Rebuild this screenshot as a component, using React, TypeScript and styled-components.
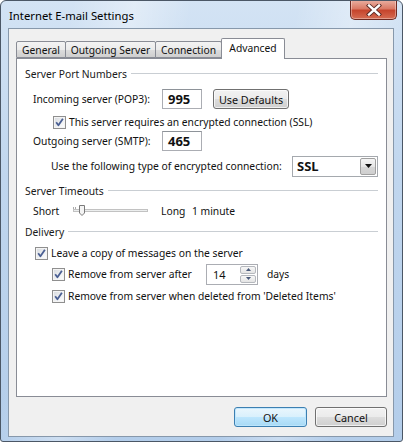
import React from "react";
import styled, { createGlobalStyle } from "styled-components";

const FONT = `"Noto Sans", "Open Sans", "DejaVu Sans", sans-serif`;

const GlobalStyle = createGlobalStyle`
  html, body { margin: 0; padding: 0; background: #ffffff; }
  body { font-family: ${FONT}; font-size: 10.3px; color: #111; }
  * { box-sizing: border-box; }
`;

const Window = styled.div`
  width: 403px;
  height: 442px;
  border: 1px solid #4b5766;
  border-radius: 6px 6px 3px 3px;
  background:
    linear-gradient(100deg, rgba(255,255,255,0) 15%, rgba(255,255,255,0.35) 28%, rgba(255,255,255,0) 40%, rgba(255,255,255,0) 62%, rgba(255,255,255,0.3) 74%, rgba(255,255,255,0) 86%),
    linear-gradient(180deg, #d3e3f4 0%, #c0d6ee 40%, #b3cdea 100%);
  display: flex;
  flex-direction: column;
  overflow: hidden;
`;

const TitleBar = styled.div`
  height: 27px;
  flex: none;
  display: flex;
  align-items: flex-start;
  justify-content: space-between;
  padding: 0 5px 0 8px;
`;

const Title = styled.div`
  font-size: 11.3px;
  line-height: 27px;
  padding-top: 1px;
  color: #000;
`;

const CloseButton = styled.div`
  width: 47px;
  height: 20px;
  margin-top: -1px;
  border: 1px solid #6e2a22;
  border-top: none;
  border-radius: 0 0 5px 5px;
  background: linear-gradient(180deg, #eab1a3 0%, #da7a66 45%, #c6452d 55%, #d66c52 100%);
  box-shadow: inset 0 0 0 1px rgba(255,255,255,0.35);
  display: flex;
  align-items: center;
  justify-content: center;
`;

const Client = styled.div`
  flex: 1;
  margin: 0 8px 4px 7px;
  border: 1px solid #8798ab;
  background: #f0f0f0;
  padding: 9px 6px 0 7px;
  display: flex;
  flex-direction: column;
`;

const TabBar = styled.div`
  height: 20px;
  display: flex;
  align-items: flex-end;
  position: relative;
  z-index: 1;
`;

const Tab = styled.div<{ $active?: boolean; $w: number }>`
  width: ${(p) => p.$w}px;
  height: ${(p) => (p.$active ? 21 : 17)}px;
  margin-right: -1px;
  margin-bottom: ${(p) => (p.$active ? -1 : 0)}px;
  border: 1px solid #898c95;
  border-bottom: ${(p) => (p.$active ? "none" : "1px solid #898c95")};
  border-radius: 2px 2px 0 0;
  background: ${(p) =>
    p.$active
      ? "#ffffff"
      : "linear-gradient(180deg, #f3f3f3 0%, #ebebeb 50%, #dddddd 51%, #cfcfcf 100%)"};
  display: flex;
  justify-content: center;
  align-items: ${(p) => (p.$active ? "flex-start" : "center")};
  padding-top: ${(p) => (p.$active ? 2 : 0)}px;
  color: #111;
  position: relative;
  z-index: ${(p) => (p.$active ? 2 : 1)};
  white-space: nowrap;
`;

const Panel = styled.div`
  width: 371px;
  height: 339px;
  border: 1px solid #898c95;
  background: #ffffff;
  padding: 5px 8px 0 8px;
  display: flex;
  flex-direction: column;
`;

const Header = styled.div<{ $h: number }>`
  height: ${(p) => p.$h}px;
  display: flex;
  align-items: center;
  gap: 4px;
  color: #1a1a1a;
`;

const HeaderLine = styled.div`
  flex: 1;
  height: 2px;
  border-top: 1px solid #c9ced3;
  border-bottom: 1px solid #ffffff;
`;

const Row = styled.div<{ $h: number; $indent: number }>`
  height: ${(p) => p.$h}px;
  padding-left: ${(p) => p.$indent}px;
  display: flex;
  align-items: center;
  white-space: nowrap;
`;

const Label = styled.span<{ $w?: number; $gap?: number }>`
  display: inline-block;
  ${(p) => (p.$w ? `width: ${p.$w}px; flex: none;` : "")}
  margin-left: ${(p) => p.$gap ?? 0}px;
  color: #111;
`;

const TextBox = styled.div`
  width: 40px;
  height: 20px;
  border: 1px solid #abadb3;
  border-top-color: #8e9399;
  background: #fff;
  font-size: 13px;
  font-weight: 700;
  padding-left: 5px;
  line-height: 18px;
  color: #111;
`;

const PushButton = styled.div<{ $w: number; $primary?: boolean; $ml?: number }>`
  width: ${(p) => p.$w}px;
  height: 20px;
  margin-left: ${(p) => p.$ml ?? 0}px;
  border: 1px solid ${(p) => (p.$primary ? "#3c7fb1" : "#707070")};
  border-radius: 3px;
  background: ${(p) =>
    p.$primary
      ? "linear-gradient(180deg, #eaf6fd 0%, #d9f0fc 50%, #bee6fd 51%, #a7d9f5 100%)"
      : "linear-gradient(180deg, #f2f2f2 0%, #ebebeb 50%, #dddddd 51%, #cfcfcf 100%)"};
  box-shadow: inset 0 0 0 1px ${(p) => (p.$primary ? "rgba(190,230,253,0.9)" : "rgba(255,255,255,0.7)")};
  display: flex;
  align-items: center;
  justify-content: center;
  font-size: 10.8px;
  color: #111;
`;

const Check = styled.span<{ $ml: number }>`
  width: 13px;
  height: 13px;
  flex: none;
  margin-left: ${(p) => p.$ml}px;
  margin-right: 3px;
  border: 1px solid #8f8f8f;
  background: linear-gradient(135deg, #d6d9dd 0%, #eef0f2 55%, #ffffff 100%);
  box-shadow: inset 0 0 0 1px #f4f4f4;
  display: inline-flex;
  align-items: center;
  justify-content: center;
`;

const Select = styled.div`
  width: 86px;
  height: 21px;
  border: 1px solid #a5a9ae;
  background: #fff;
  display: flex;
  align-items: center;
  justify-content: space-between;
  padding: 1px 1px 1px 4px;
  font-size: 13px;
  font-weight: 700;
  color: #111;
`;

const DropButton = styled.div`
  width: 16px;
  height: 17px;
  border: 1px solid #a0a0a0;
  border-radius: 2px;
  background: linear-gradient(180deg, #f5f5f5 0%, #e6e6e6 50%, #d6d6d6 51%, #cfcfcf 100%);
  display: flex;
  align-items: center;
  justify-content: center;
`;

const Spinner = styled.div`
  width: 52px;
  height: 21px;
  border: 1px solid #abadb3;
  background: #fff;
  display: flex;
  align-items: center;
  justify-content: space-between;
  padding: 1px 1px 1px 6px;
  font-size: 11px;
  color: #111;
`;

const SpinButtons = styled.div`
  width: 16px;
  height: 17px;
  display: flex;
  flex-direction: column;
  gap: 1px;
`;

const SpinHalf = styled.div`
  flex: 1;
  border: 1px solid #b5b8bd;
  border-radius: 2px;
  background: linear-gradient(180deg, #f7f7f7 0%, #e4e4e4 100%);
  display: flex;
  align-items: center;
  justify-content: center;
`;

const ButtonRow = styled.div`
  width: 371px;
  margin-top: 10px;
  display: flex;
  justify-content: flex-end;
  gap: 8px;
`;

const CheckBox: React.FC<{ ml: number }> = ({ ml }) => (
  <Check $ml={ml}>
    <svg width="11" height="11" viewBox="0 0 11 11">
      <path d="M2.2 5.3 L4.4 8.2 L8.9 1.8" fill="none" stroke="#4a5f93" strokeWidth="1.8" strokeLinejoin="round" />
    </svg>
  </Check>
);

const Slider: React.FC = () => (
  <svg width="78" height="16" viewBox="0 0 78 16" style={{ flex: "none" }}>
    <rect x="1.5" y="6.5" width="74" height="2" fill="#eceeee" stroke="#c2c2c2" />
    <path d="M1.5 4 V6 M3.5 4 V6" stroke="#aaaaaa" strokeWidth="1" />
    <path d="M7.5 2.5 H12.5 V10 L10 12.5 L7.5 10 Z" fill="#f4f4f4" stroke="#7a7a7a" />
  </svg>
);

const CloseX: React.FC = () => (
  <svg width="16" height="12" viewBox="0 0 16 12">
    <path d="M3 1.5 L13 10.5 M13 1.5 L3 10.5" stroke="#5a2a25" strokeWidth="4.2" strokeLinecap="square" />
    <path d="M3 1.5 L13 10.5 M13 1.5 L3 10.5" stroke="#ffffff" strokeWidth="2.4" strokeLinecap="square" />
  </svg>
);

export default function App() {
  return (
    <>
      <GlobalStyle />
      <Window>
        <TitleBar>
          <Title>Internet E-mail Settings</Title>
          <CloseButton>
            <CloseX />
          </CloseButton>
        </TitleBar>
        <Client>
          <TabBar>
            <Tab $w={50}>General</Tab>
            <Tab $w={91}>Outgoing Server</Tab>
            <Tab $w={67}>Connection</Tab>
            <Tab $w={64} $active>Advanced</Tab>
          </TabBar>
          <Panel>
            <Header $h={20}>
              <span>Server Port Numbers</span>
              <HeaderLine />
            </Header>
            <Row $h={30} $indent={8}>
              <Label $w={129}>Incoming server (POP3):</Label>
              <TextBox>995</TextBox>
              <PushButton $w={76} $ml={11}>Use Defaults</PushButton>
            </Row>
            <Row $h={16} $indent={0}>
              <CheckBox ml={28} />
              <Label>This server requires an encrypted connection (SSL)</Label>
            </Row>
            <Row $h={22} $indent={8}>
              <Label $w={129}>Outgoing server (SMTP):</Label>
              <TextBox>465</TextBox>
            </Row>
            <Row $h={28} $indent={26}>
              <Label $w={241}>Use the following type of encrypted connection:</Label>
              <Select>
                <span>SSL</span>
                <DropButton>
                  <svg width="7" height="4" viewBox="0 0 7 4">
                    <path d="M0 0 H7 L3.5 4 Z" fill="#111" />
                  </svg>
                </DropButton>
              </Select>
            </Row>
            <Header $h={22}>
              <span>Server Timeouts</span>
              <HeaderLine />
            </Header>
            <Row $h={18} $indent={8}>
              <Label $w={39}>Short</Label>
              <Slider />
              <Label $w={31} $gap={11}>Long</Label>
              <Label>1 minute</Label>
            </Row>
            <Header $h={24}>
              <span>Delivery</span>
              <HeaderLine />
            </Header>
            <Row $h={18} $indent={0}>
              <CheckBox ml={10} />
              <Label>Leave a copy of messages on the server</Label>
            </Row>
            <Row $h={24} $indent={0}>
              <CheckBox ml={27} />
              <Label $w={138}>Remove from server after</Label>
              <Spinner>
                <span>14</span>
                <SpinButtons>
                  <SpinHalf>
                    <svg width="5" height="3" viewBox="0 0 5 3"><path d="M0 3 H5 L2.5 0 Z" fill="#4a5a7a" /></svg>
                  </SpinHalf>
                  <SpinHalf>
                    <svg width="5" height="3" viewBox="0 0 5 3"><path d="M0 0 H5 L2.5 3 Z" fill="#4a5a7a" /></svg>
                  </SpinHalf>
                </SpinButtons>
              </Spinner>
              <Label $gap={9}>days</Label>
            </Row>
            <Row $h={20} $indent={0}>
              <CheckBox ml={27} />
              <Label>Remove from server when deleted from 'Deleted Items'</Label>
            </Row>
          </Panel>
          <ButtonRow>
            <PushButton $w={73} $primary>OK</PushButton>
            <PushButton $w={72}>Cancel</PushButton>
          </ButtonRow>
        </Client>
      </Window>
    </>
  );
}
